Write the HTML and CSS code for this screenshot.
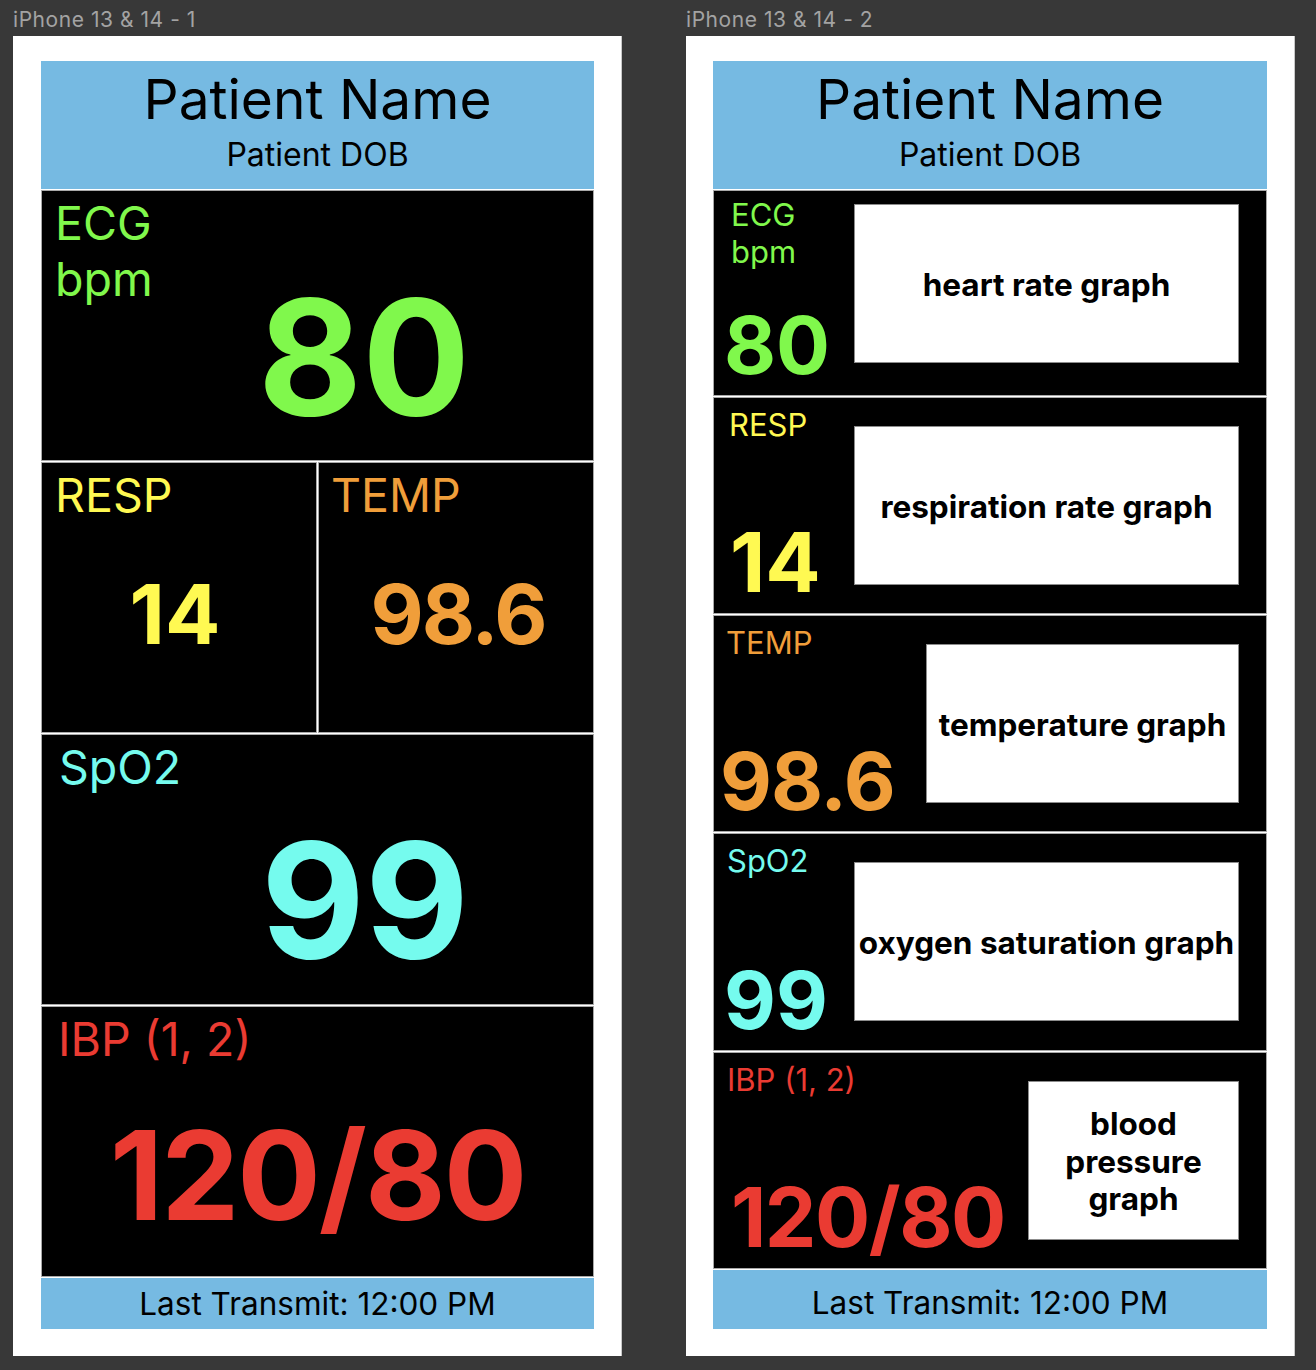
FILE: index.html
```html
<!DOCTYPE html>
<html lang="en">
<head>
<meta charset="utf-8">
<title>Patient Monitor</title>
<link rel="stylesheet" href="styles.css">
</head>
<body>
<div class="canvas">
  <section class="artboard">
    <div class="artboard-title">iPhone 13 &amp; 14 - 1</div>
    <div class="frame frame-a">
      <div class="panel">
        <header class="pt-header">
          <div class="pt-name">Patient Name</div>
          <div class="pt-dob">Patient DOB</div>
        </header>
        <div class="tile tile-ecg">
          <div class="lbl green">ECG<br>bpm</div>
          <div class="val green">80</div>
        </div>
        <div class="tile-row">
          <div class="tile tile-resp">
            <div class="lbl yellow">RESP</div>
            <div class="val yellow">14</div>
          </div>
          <div class="tile tile-temp">
            <div class="lbl orange">TEMP</div>
            <div class="val orange">98.6</div>
          </div>
        </div>
        <div class="tile tile-spo2">
          <div class="lbl cyan">SpO2</div>
          <div class="val cyan">99</div>
        </div>
        <div class="tile tile-ibp">
          <div class="lbl red">IBP (1, 2)</div>
          <div class="val red">120/80</div>
        </div>
        <footer class="pt-footer">Last Transmit: 12:00 PM</footer>
      </div>
    </div>
  </section>

  <section class="artboard">
    <div class="artboard-title">iPhone 13 &amp; 14 - 2</div>
    <div class="frame frame-b">
      <div class="panel">
        <header class="pt-header">
          <div class="pt-name">Patient Name</div>
          <div class="pt-dob">Patient DOB</div>
        </header>
        <div class="mrow mrow-ecg">
          <div class="mlbl green">ECG<br>bpm</div>
          <div class="mval green">80</div>
          <div class="graph graph-wide">heart rate graph</div>
        </div>
        <div class="mrow mrow-resp">
          <div class="mlbl yellow">RESP</div>
          <div class="mval yellow">14</div>
          <div class="graph graph-wide">respiration rate graph</div>
        </div>
        <div class="mrow mrow-temp">
          <div class="mlbl orange">TEMP</div>
          <div class="mval orange">98.6</div>
          <div class="graph graph-mid">temperature graph</div>
        </div>
        <div class="mrow mrow-spo2">
          <div class="mlbl cyan">SpO2</div>
          <div class="mval cyan">99</div>
          <div class="graph graph-wide">oxygen saturation graph</div>
        </div>
        <div class="mrow mrow-ibp">
          <div class="mlbl red">IBP (1, 2)</div>
          <div class="mval red">120/80</div>
          <div class="graph graph-narrow">blood pressure graph</div>
        </div>
        <footer class="pt-footer pt-footer-b">Last Transmit: 12:00 PM</footer>
      </div>
    </div>
  </section>
</div>
</body>
</html>
```

FILE: styles.css
```css
* { box-sizing: border-box; }

body {
  margin: 0;
  background: #383838;
  font-family: Inter, "Noto Sans", "Liberation Sans", sans-serif;
  color: #000;
}

.canvas {
  display: flex;
  gap: 64px;
  padding-left: 13px;
}

.artboard { width: 609px; }

.artboard-title {
  height: 36px;
  padding-top: 3px;
  line-height: 33px;
  font-size: 21px;
  letter-spacing: 0.55px;
  color: #a3a3a3;
  white-space: nowrap;
}

.frame {
  background: #fff;
  height: 1320px;
  padding-top: 25px;
  padding-left: 28px;
  border-right: 1px solid #c8c8c8;
}
.frame-b { padding-left: 27px; }

.panel {
  display: flex;
  flex-direction: column;
  gap: 1px;
  width: 553px;
}
.frame-b .panel { width: 554px; }

/* header / footer */
.pt-header {
  height: 128px;
  background: #76bae2;
  text-align: center;
  padding-top: 5px;
}
.pt-name { font-size: 55px; line-height: 66px; }
.pt-dob { font-size: 32px; line-height: 38px; margin-top: 4px; }

.pt-footer {
  height: 51px;
  background: #76bae2;
  text-align: center;
  font-size: 31.5px;
  line-height: 51px;
}
.pt-footer-b { height: 59px; padding-top: 7px; line-height: 52px; }

/* colours */
.green { color: #80f84c; }
.yellow { color: #fff952; }
.orange { color: #f09e3a; }
.cyan { color: #75fbee; }
.red { color: #ea3b32; }

/* frame 1 tiles */
.tile {
  background: #000;
  border: 1px solid #a8a8a8;
  height: 271px;
  display: grid;
}
.tile > * { grid-area: 1 / 1; }

.tile-row {
  display: flex;
  gap: 1px;
}
.tile-row .tile { flex: 1; }

.lbl {
  align-self: start;
  font-size: 46.5px;
  line-height: 56px;
  padding: 4px 0 0 13px;
}
.tile-temp .lbl { padding-left: 12px; }
.tile-spo2 .lbl { padding-left: 17px; }
.tile-ibp .lbl { padding-left: 16px; }

.val {
  align-self: end;
  font-weight: 700;
  line-height: 1;
  white-space: nowrap;
}
.tile-ecg .val,
.tile-spo2 .val {
  font-size: 160px;
  justify-self: start;
  margin: 0 0 23px 216px;
}
.tile-spo2 .val { margin-left: 219px; margin-bottom: 24px; }
.tile-resp .val,
.tile-temp .val {
  font-size: 82px;
  justify-self: center;
  margin-bottom: 76px;
}
.tile-resp .val { margin-right: 8px; }
.tile-temp .val { letter-spacing: -2px; margin-left: 4px; }
.tile-ibp .val {
  font-size: 124px;
  letter-spacing: -2px;
  justify-self: center;
  margin-bottom: 39px;
}

/* frame 2 rows */
.mrow {
  background: #000;
  border: 1px solid #a8a8a8;
  height: 217px;
  display: grid;
  grid-template-columns: 1fr auto;
}
.mrow-ecg { height: 206px; }
.mrow-spo2 { height: 218px; }

.mlbl {
  grid-column: 1;
  grid-row: 1;
  align-self: start;
  font-size: 31px;
  line-height: 37px;
  padding: 8px 0 0 13px;
}
.mrow-ecg .mlbl { padding: 5px 0 0 17px; }
.mrow-resp .mlbl { padding-left: 15px; }
.mrow-temp .mlbl { padding-left: 12px; }

.mval {
  grid-column: 1;
  grid-row: 1;
  align-self: end;
  justify-self: start;
  font-size: 80px;
  font-weight: 700;
  line-height: 1;
  margin: 0 0 10px 10px;
  white-space: nowrap;
}
.mrow-resp .mval { margin-left: 16px; font-size: 82px; margin-bottom: 9px; }
.mrow-temp .mval { margin-left: 6px; letter-spacing: -1px; }
.mrow-ibp .mval { font-size: 82px; letter-spacing: -1.5px; margin-left: 17px; margin-bottom: 9px; }

.graph {
  grid-column: 2;
  grid-row: 1;
  align-self: start;
  height: 159px;
  margin: 28px 27px 0 0;
  background: #fff;
  border: 1px solid #8c8c8c;
  display: flex;
  align-items: center;
  justify-content: center;
  text-align: center;
  font-family: Inter, "Noto Sans", sans-serif;
  font-weight: 700;
  font-size: 31.5px;
  line-height: 37.5px;
  color: #000;
  padding: 2px 1px 0;
}
.mrow-ecg .graph { margin-top: 13px; }
.graph-wide { width: 385px; }
.graph-mid { width: 313px; }
.graph-narrow { width: 211px; padding: 2px 12px 0; }
```
